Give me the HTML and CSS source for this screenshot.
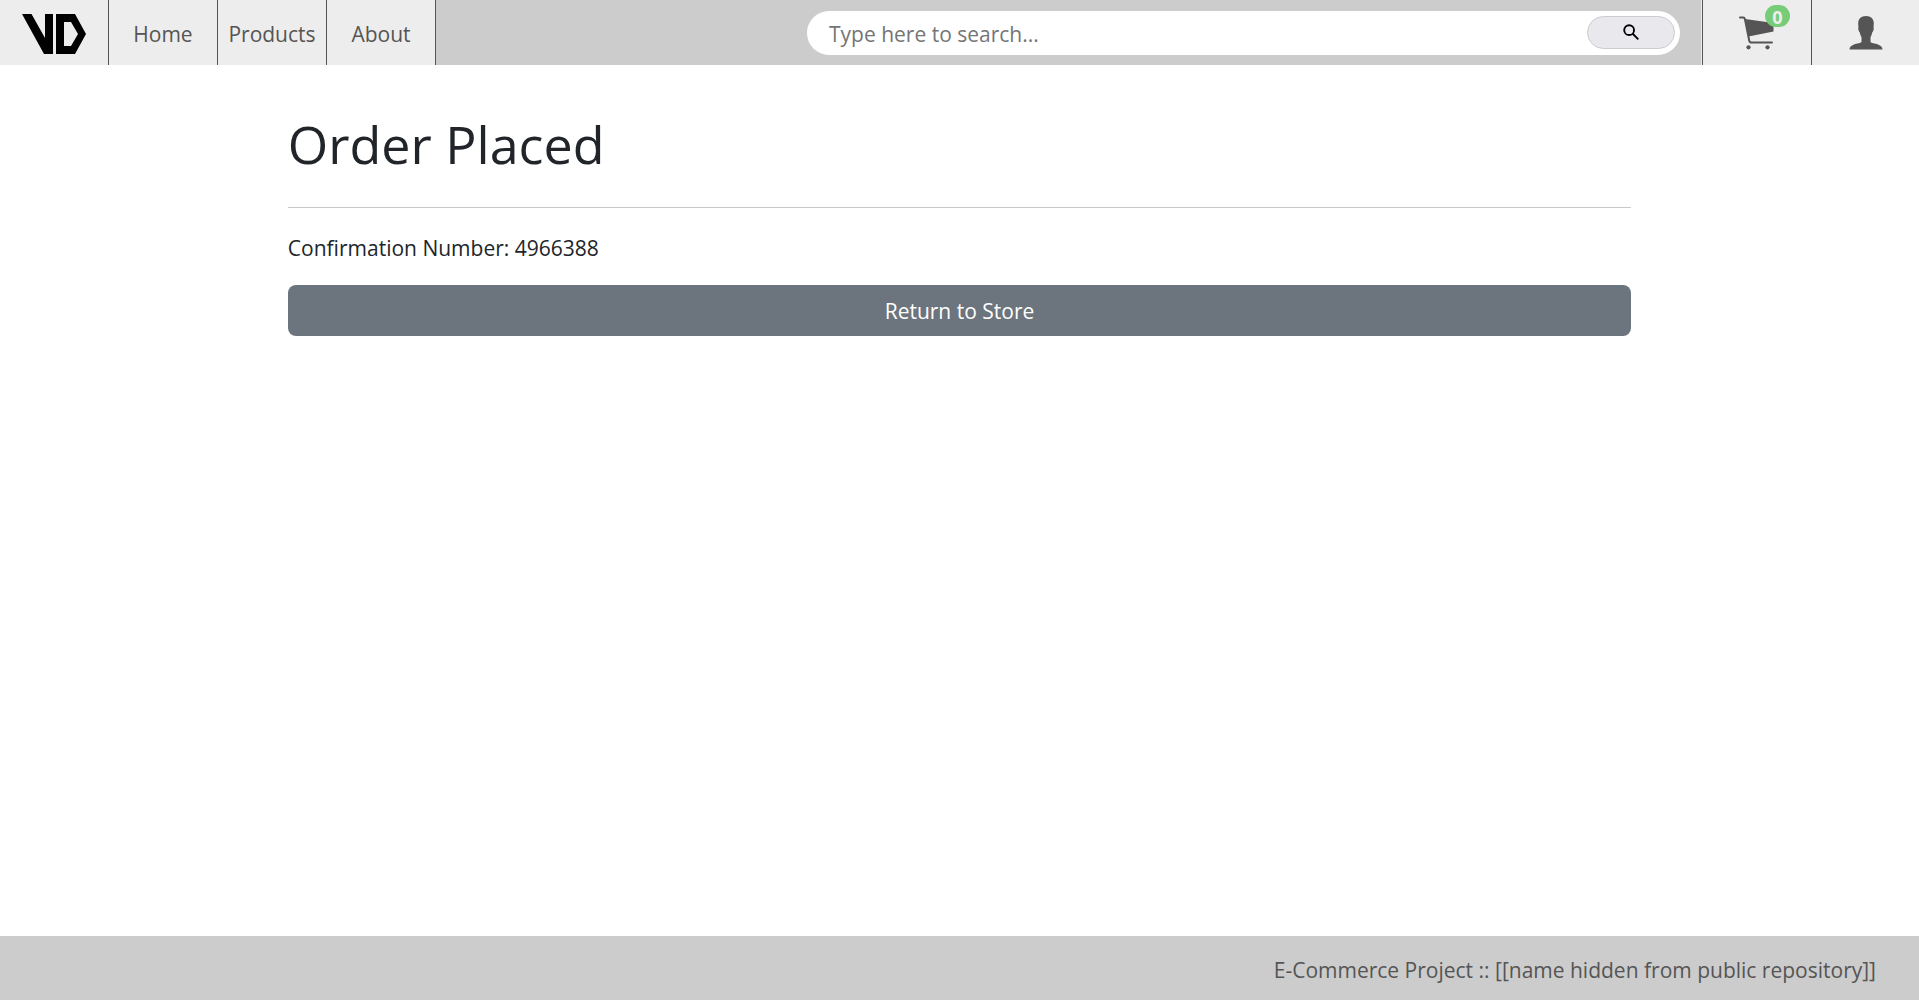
FILE: index.html
```html
<!DOCTYPE html>
<html lang="en">
<head>
  <meta charset="utf-8">
  <meta name="viewport" content="width=device-width, initial-scale=1">
  <title>Order Placed</title>
  <link rel="stylesheet" href="styles.css">
</head>
<body>
  <header class="topbar">
    <nav class="nav" aria-label="Main">
      <a class="tile" href="#" aria-label="Store home">
        <svg class="logo" viewBox="0 0 64 40" aria-hidden="true">
          <path d="M0 0H9.500L23 24V0H31V40H22z"/>
          <path fill-rule="evenodd" d="M34 0H53L64 20L53 40H34zM42 8V32H49L56 20L49 8z"/>
        </svg>
      </a>
      <a class="tile" href="#">Home</a>
      <a class="tile" href="#">Products</a>
      <a class="tile" href="#">About</a>
    </nav>
    <form class="search" role="search">
      <input class="search-input" type="search" placeholder="Type here to search..." aria-label="Search">
      <button class="search-button" type="submit" aria-label="Search">
        <svg class="search-icon" viewBox="0 0 18 18" aria-hidden="true">
          <circle cx="6.500" cy="6.500" r="5.200"/>
          <path d="M10.300 10.300L16.200 16.200"/>
        </svg>
      </button>
    </form>
    <nav class="account" aria-label="Account">
      <a class="tile" href="#" aria-label="Cart">
        <span class="cart">
          <svg class="cart-icon" viewBox="0 0 36 34" aria-hidden="true">
            <path class="cart-frame" d="M1 1.500H4.200Q5.500 1.500 5.900 3L10.200 24.500Q10.600 26.500 12.500 26.500H33"/>
            <path d="M6 3L34.500 7V15.500L9.500 20.500z"/>
            <circle cx="9.500" cy="31.300" r="2.100"/>
            <circle cx="28.500" cy="31.300" r="2.100"/>
          </svg>
          <span class="badge">0</span>
        </span>
      </a>
      <a class="tile" href="#" aria-label="Profile">
        <svg class="user-icon" viewBox="0 0 34 34" aria-hidden="true">
          <path d="M17 0C22 0 25 3 24.800 7.500C24.800 9 24.500 10 24.600 11.200C25 13 24.300 15.500 23.300 16.300C22.800 19 21.800 20.500 21.500 21.500V25.500C22 27.500 26 27.200 29 28.500C32 29.800 33.300 31 33.500 33.500H.5C.7 31 2 29.800 5 28.500C8 27.200 12 27.500 12.500 25.500V21.500C12.200 20.500 11.200 19 10.700 16.300C9.700 15.500 9 13 9.400 11.200C9.500 10 9.200 9 9.200 7.500C9 3 12 0 17 0z"/>
        </svg>
      </a>
    </nav>
  </header>
  <main class="content">
    <h1 class="title">Order Placed</h1>
    <hr class="rule">
    <p class="confirmation">Confirmation Number: 4966388</p>
    <button class="return-button" type="button">Return to Store</button>
  </main>
  <footer class="footer">E-Commerce Project :: [[name hidden from public repository]]</footer>
</body>
</html>
```
FILE: styles.css
```css
* {
  box-sizing: border-box;
}

body {
  display: flex;
  flex-direction: column;
  min-height: 100vh;
  margin: 0;
  background: #fff;
  color: #212529;
  font: 21px/32px "Segoe UI", "Open Sans", "Noto Sans", sans-serif;
}

.topbar {
  display: flex;
  align-items: center;
  min-height: 65px;
  background: #ccc;
}

.nav,
.account {
  display: flex;
  align-self: stretch;
}

.tile {
  display: flex;
  align-items: center;
  justify-content: center;
  width: 109px;
  padding-top: 2px;
  border-right: 1px solid #555;
  background: #ededed;
  color: #555;
  text-decoration: none;
}

.account {
  border-left: 1px solid #ededed;
}

.account .tile {
  padding-top: 0;
  border-right: 0;
  border-left: 1px solid #555;
}

.account .tile:last-child {
  width: 108px;
}

.logo {
  width: 64px;
  height: 40px;
}

.search {
  display: flex;
  align-items: center;
  width: 46%;
  max-width: 873px;
  height: 44px;
  margin: 0 21px 0 auto;
  padding: 0 5px 0 22px;
  border-radius: 22px;
  background: #fff;
}

.search-input {
  flex: 1;
  min-width: 0;
  padding: 2px 0 0;
  border: 0;
  outline: 0;
  background: transparent;
  color: #555;
  font: inherit;
}

.search-input::placeholder {
  color: #757575;
}

.search-button {
  display: grid;
  place-items: center;
  width: 88px;
  height: 33px;
  padding: 0;
  border: 1px solid #ccc;
  border-radius: 17px;
  background: #e9e9ed;
}

.search-icon {
  width: 17px;
  height: 17px;
  fill: none;
  stroke: #000;
  stroke-width: 2;
}

.cart {
  display: flex;
  position: relative;
}

.cart-icon {
  width: 36px;
  height: 34px;
  fill: #555;
}

.cart-frame {
  fill: none;
  stroke: #555;
  stroke-width: 2;
  stroke-linecap: round;
}

.badge {
  position: absolute;
  top: -11px;
  right: -15px;
  width: 25px;
  height: 22px;
  border-radius: 11px;
  background: #7c7;
  color: #ededed;
  font-size: 18px;
  font-weight: 700;
  line-height: 25px;
  text-align: center;
}

.user-icon {
  width: 34px;
  height: 34px;
  fill: #555;
}

.content {
  flex: 1;
  width: 70%;
  margin: 0 auto;
  padding-top: 46px;
}

.title {
  margin: 0;
  padding-bottom: 30px;
  font-size: 52px;
  font-weight: 400;
  line-height: 66px;
}

.rule {
  height: 1px;
  margin: 0 0 24px;
  border: 0;
  background: #c8c9ca;
}

.confirmation {
  margin: 0 0 21px;
}

.return-button {
  display: block;
  width: 100%;
  padding: 10px 16px 9px;
  border: 0;
  border-radius: 8px;
  background: #6c757d;
  color: #fff;
  font: inherit;
}

.footer {
  padding: 18px 43px 14px;
  background: #ccc;
  color: #555;
  text-align: right;
}
```
